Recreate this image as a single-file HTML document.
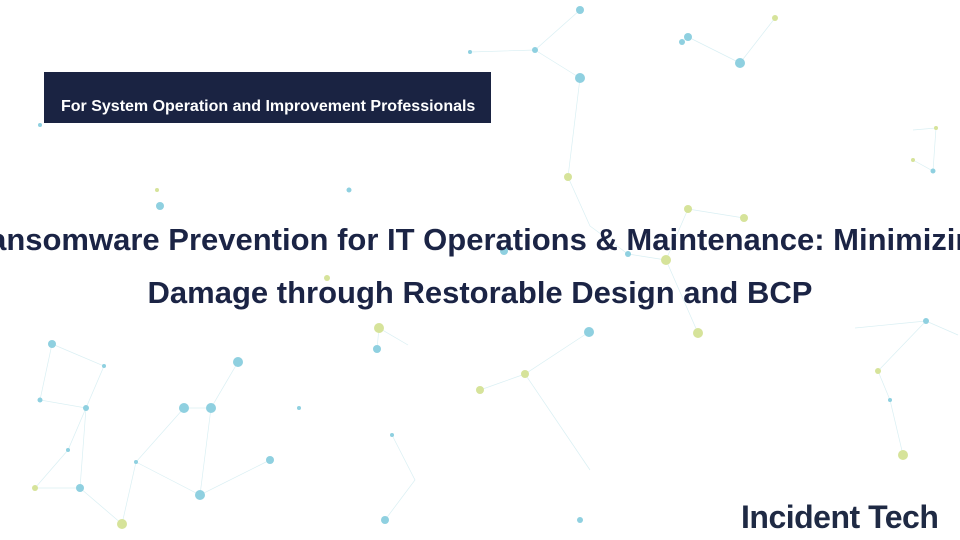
<!DOCTYPE html>
<html><head><meta charset="utf-8"><style>
html,body{margin:0;padding:0}
body{width:960px;height:540px;position:relative;overflow:hidden;background:#fff;font-family:"Liberation Sans",sans-serif}
svg{position:absolute;left:0;top:0}
.banner{position:absolute;left:44px;top:72px;width:447px;height:51px;background:#1a2342}
.banner span{position:absolute;left:17px;top:26px;color:#fff;font-weight:bold;font-size:16px;letter-spacing:0;white-space:nowrap}
.t{position:absolute;left:-200px;width:1360px;text-align:center;color:#1b2445;font-weight:bold;font-size:31px;white-space:nowrap}
.logo{position:absolute;left:741px;top:499px;color:#1f2a44;font-weight:bold;font-size:32px;letter-spacing:-0.5px}
</style></head><body>
<svg width="960" height="540" viewBox="0 0 960 540">
<g stroke="#9fd6e2" stroke-width="0.7" opacity="0.4" fill="none">
<path d="M52 344 L104 366 L86 408 L40 400 L52 344 M86 408 L80 488 L35 488 L68 450 L86 408 M80 488 L122 524 L136 462 L184 408 L211 408 L238 362 M136 462 L200 495 L270 460 M211 408 L200 495 M377 349 L379 328 L408 345 M392 435 L415 480 L385 520 M480 390 L525 374 L589 332 M525 374 L590 470 M580 10 L535 50 L470 52 M535 50 L580 78 L568 177 L590 226 M688 37 L740 63 L775 18 M688 37 L682 42 M913 130 L936 128 L933 171 L913 160 M855 328 L926 321 L958 335 M926 321 L878 371 L890 400 L903 455 M688 209 L744 218 M666 260 L628 254 L590 226 M698 333 L666 260 L688 209"/>
</g>
<g fill="#8fd0e0">
<circle cx="52" cy="344" r="4"/><circle cx="104" cy="366" r="2"/><circle cx="86" cy="408" r="3"/><circle cx="40" cy="400" r="2.5"/><circle cx="68" cy="450" r="2"/><circle cx="80" cy="488" r="4"/><circle cx="136" cy="462" r="2"/><circle cx="184" cy="408" r="5"/><circle cx="211" cy="408" r="5"/><circle cx="238" cy="362" r="5"/><circle cx="200" cy="495" r="5"/><circle cx="270" cy="460" r="4"/><circle cx="377" cy="349" r="4"/><circle cx="392" cy="435" r="2"/><circle cx="385" cy="520" r="4"/><circle cx="589" cy="332" r="5"/><circle cx="580" cy="10" r="4"/><circle cx="535" cy="50" r="3"/><circle cx="580" cy="78" r="5"/><circle cx="470" cy="52" r="2"/><circle cx="688" cy="37" r="4"/><circle cx="682" cy="42" r="3"/><circle cx="740" cy="63" r="5"/><circle cx="160" cy="206" r="4"/><circle cx="349" cy="190" r="2.5"/><circle cx="504" cy="251" r="4"/><circle cx="628" cy="254" r="3"/><circle cx="933" cy="171" r="2.5"/><circle cx="926" cy="321" r="3"/><circle cx="890" cy="400" r="2"/><circle cx="580" cy="520" r="3"/><circle cx="40" cy="125" r="2"/><circle cx="299" cy="408" r="2"/>
</g>
<g fill="#d6e39a">
<circle cx="568" cy="177" r="4"/><circle cx="688" cy="209" r="4"/><circle cx="744" cy="218" r="4"/><circle cx="666" cy="260" r="5"/><circle cx="698" cy="333" r="5"/><circle cx="525" cy="374" r="4"/><circle cx="480" cy="390" r="4"/><circle cx="379" cy="328" r="5"/><circle cx="327" cy="278" r="3"/><circle cx="35" cy="488" r="3"/><circle cx="122" cy="524" r="5"/><circle cx="878" cy="371" r="3"/><circle cx="903" cy="455" r="5"/><circle cx="775" cy="18" r="3"/><circle cx="936" cy="128" r="2"/><circle cx="913" cy="160" r="2"/><circle cx="157" cy="190" r="2"/>
</g>
</svg>
<div class="banner"><span>For System Operation and Improvement Professionals</span></div>
<div class="t" style="top:222px">Ransomware Prevention for IT Operations &amp; Maintenance: Minimizing</div>
<div class="t" style="top:275px">Damage through Restorable Design and BCP</div>
<div class="logo">Incident Tech</div>
</body></html>
